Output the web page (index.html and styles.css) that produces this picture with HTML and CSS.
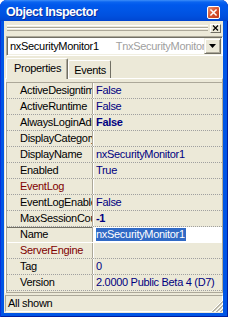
FILE: index.html
```html
<!DOCTYPE html>
<html>
<head>
<meta charset="utf-8">
<link rel="stylesheet" href="styles.css">
</head>
<body>
<div class="window">
  <div class="titlebar">
    <span class="title">Object Inspector</span>
    <span class="close"><svg width="13" height="13" viewBox="0 0 13 13"><path d="M3.5 3.5 L9.5 9.5 M9.5 3.5 L3.5 9.5" stroke="#fff" stroke-width="1.8" stroke-linecap="square"/></svg></span>
  </div>
  <div class="client">
    <div class="grip">
      <div class="grip-lines"></div>
      <span class="grip-close"><svg width="9" height="7" viewBox="0 0 9 7"><path d="M2 0.5 L7 5.5 M7 0.5 L2 5.5" stroke="#000" stroke-width="1.2"/></svg></span>
    </div>
    <div class="combo">
      <div class="combo-field"><span class="combo-name">nxSecurityMonitor1</span><span class="combo-type">TnxSecurityMonitor</span></div>
      <div class="combo-btn"><svg width="7" height="4" viewBox="0 0 7 4"><path d="M0 0 H7 L3.5 4 Z" fill="#000"/></svg></div>
    </div>
    <div class="tabs">
      <div class="tab active">Properties</div>
      <div class="tab">Events</div>
    </div>
    <div class="page">
      <div class="grid">
        <div class="row"><span class="name">ActiveDesigntime</span><span class="value">False</span></div>
        <div class="row"><span class="name">ActiveRuntime</span><span class="value">False</span></div>
        <div class="row"><span class="name">AlwaysLoginAdmin</span><span class="value bold">False</span></div>
        <div class="row"><span class="name">DisplayCategory</span><span class="value"></span></div>
        <div class="row"><span class="name">DisplayName</span><span class="value">nxSecurityMonitor1</span></div>
        <div class="row"><span class="name">Enabled</span><span class="value">True</span></div>
        <div class="row"><span class="name ref">EventLog</span><span class="value"></span></div>
        <div class="row"><span class="name">EventLogEnabled</span><span class="value">False</span></div>
        <div class="row"><span class="name">MaxSessionCount</span><span class="value bold">-1</span></div>
        <div class="row selected"><span class="name">Name</span><span class="value edit"><span class="sel">nxSecurityMonitor1</span></span></div>
        <div class="row"><span class="name ref">ServerEngine</span><span class="value"></span></div>
        <div class="row"><span class="name">Tag</span><span class="value">0</span></div>
        <div class="row"><span class="name">Version</span><span class="value">2.0000 Public Beta 4 (D7)</span></div>
      </div>
    </div>
    <div class="status">
      <div class="status-panel">All shown</div>
      <svg class="sizegrip" width="12" height="12" viewBox="0 0 12 12">
        <path d="M11 1 L1 11 M11 5 L5 11 M11 9 L9 11" stroke="#fff" stroke-width="1"/>
        <path d="M12 1 L1 12 M12 2 L2 12 M12 5 L5 12 M12 6 L6 12 M12 9 L9 12 M12 10 L10 12" stroke="#ACA899" stroke-width="0.8"/>
      </svg>
    </div>
  </div>
</div>
</body>
</html>
```

FILE: styles.css
```css
* { box-sizing: border-box; }
html, body { margin: 0; padding: 0; background: #fff; }
body {
  width: 228px;
  height: 317px;
  overflow: hidden;
  font-family: "Liberation Sans", Arial, sans-serif;
  font-size: 11px;
  letter-spacing: -0.3px;
}
.window {
  width: 228px;
  height: 317px;
  display: flex;
  flex-direction: column;
  background: #0055E5;
  border-radius: 7px 7px 0 0;
  overflow: hidden;
  box-shadow: inset 1px 0 0 #0831D9, inset -1px 0 0 #001EA0, inset 0 -1px 0 #001EA0;
}
.titlebar {
  height: 21px;
  flex: none;
  display: flex;
  align-items: center;
  padding: 2px 8px 0 6px;
  color: #fff;
  background: linear-gradient(#3D8EF8 0, #0A64F0 2px, #0058EC 5px, #0055E5 11px, #0050DE 16px, #0048D4 20px, #0042CB 21px);
}
.title {
  flex: 1;
  font-weight: bold;
  font-size: 12.5px;
  letter-spacing: -0.45px;
  text-shadow: 1px 1px 0 #0A2C9A;
  padding-top: 1px;
}
.close {
  width: 13px;
  height: 13px;
  border: 1px solid #fff;
  border-radius: 2px;
  background: linear-gradient(135deg, #E8906E, #D8532E 50%, #C0391A);
  display: flex;
  align-items: center;
  justify-content: center;
  margin-top: 1px;
}
.close svg { display: block; }
.client {
  flex: 1;
  margin: 0 5px 4px 4px;
  background: #ECE9D8;
  display: flex;
  flex-direction: column;
  min-height: 0;
}
.grip {
  height: 14px;
  flex: none;
  display: flex;
  align-items: center;
  padding: 0 2px 0 3px;
}
.grip-lines {
  flex: 1;
  height: 6px;
  background: linear-gradient(to bottom, #fff 0 1px, #ECE9D8 1px 2px, #ACA899 2px 3px, #fff 3px 4px, #ECE9D8 4px 5px, #ACA899 5px 6px);
}
.grip-close {
  width: 11px;
  height: 9px;
  margin-left: 2px;
  border-top: 1px solid #fff;
  border-left: 1px solid #fff;
  border-right: 1px solid #716F64;
  border-bottom: 1px solid #716F64;
  display: flex;
  align-items: center;
  justify-content: center;
}
.grip-close svg { display: block; }
.combo {
  height: 20px;
  flex: none;
  margin: 1px 0 1px 2px;
  display: flex;
  border-top: 1px solid #ACA899;
  border-left: 1px solid #ACA899;
  border-right: 1px solid #fff;
  border-bottom: 1px solid #fff;
  box-shadow: inset 1px 1px 0 #716F64, inset -1px -1px 0 #F1EFE2;
  padding: 1px;
}
.combo-field {
  flex: 1;
  background: #fff;
  display: flex;
  align-items: center;
  gap: 17px;
  padding-left: 2px;
  overflow: hidden;
  white-space: nowrap;
  min-width: 0;
}
.combo-name { color: #000; }
.combo-type { color: #A0A0A0; }
.combo-btn {
  width: 17px;
  flex: none;
  background: #ECE9D8;
  border-top: 1px solid #F1EFE2;
  border-left: 1px solid #F1EFE2;
  border-right: 1px solid #716F64;
  border-bottom: 1px solid #716F64;
  box-shadow: inset 1px 1px 0 #fff, inset -1px -1px 0 #ACA899;
  display: flex;
  align-items: center;
  justify-content: center;
}
.combo-btn svg { display: block; }
.tabs {
  height: 21px;
  flex: none;
  display: flex;
  align-items: flex-end;
  padding-left: 2px;
  position: relative;
  z-index: 1;
}
.tab {
  height: 18px;
  padding: 0 4px 0 5px;
  display: flex;
  align-items: center;
  border-top: 1px solid #fff;
  border-left: 1px solid #fff;
  border-right: 1px solid #716F64;
  border-radius: 2px 2px 0 0;
  color: #000;
}
.tab.active {
  height: 21px;
  margin-bottom: -1px;
  padding: 0 6px 3px 7px;
  background: #ECE9D8;
  box-shadow: inset -1px 0 0 #ACA899;
}
.page {
  flex: 1;
  margin-left: 1px;
  border-top: 1px solid #fff;
  border-left: 1px solid #fff;
  border-right: 1px solid #ACA899;
  padding-top: 3px;
  display: flex;
  flex-direction: column;
  min-height: 0;
}
.grid {
  border-top: 1px solid #ACA899;
  border-left: 1px solid #ACA899;
  border-bottom: 1px solid #ACA899;
  padding-bottom: 1px;
}
.row {
  height: 16px;
  display: flex;
  border-bottom: 1px dotted #A0A0A0;
}
.name {
  width: 86px;
  flex: none;
  padding-left: 13px;
  line-height: 15px;
  white-space: nowrap;
  overflow: hidden;
  text-overflow: clip;
  color: #000;
  border-right: 1px solid #ACA899;
}
.name.ref { color: #800000; }
.value {
  flex: 1;
  min-width: 0;
  padding-left: 2px;
  line-height: 15px;
  white-space: nowrap;
  overflow: hidden;
  color: #000080;
  border-left: 1px solid #fff;
}
.value.bold { font-weight: bold; }
.row.selected { border-bottom: 1px solid #fff; box-shadow: inset 0 1px 0 #716F64; }
.value.edit {
  background: #fff;
  padding-top: 1px;
  line-height: 13px;
}
.sel { background: #316AC5; color: #fff; display: inline-block; padding: 0 1px 0 0; }
.status {
  height: 20px;
  flex: none;
  display: flex;
  align-items: flex-end;
  padding: 0 0 1px 1px;
}
.status-panel {
  flex: 1;
  height: 17px;
  line-height: 15px;
  padding-left: 2px;
  border-top: 1px solid #ACA899;
  border-left: 1px solid #ACA899;
  border-bottom: 1px solid #fff;
  border-right: 1px solid #fff;
  color: #000;
}
.sizegrip { display: block; flex: none; margin-left: -12px; }
```
